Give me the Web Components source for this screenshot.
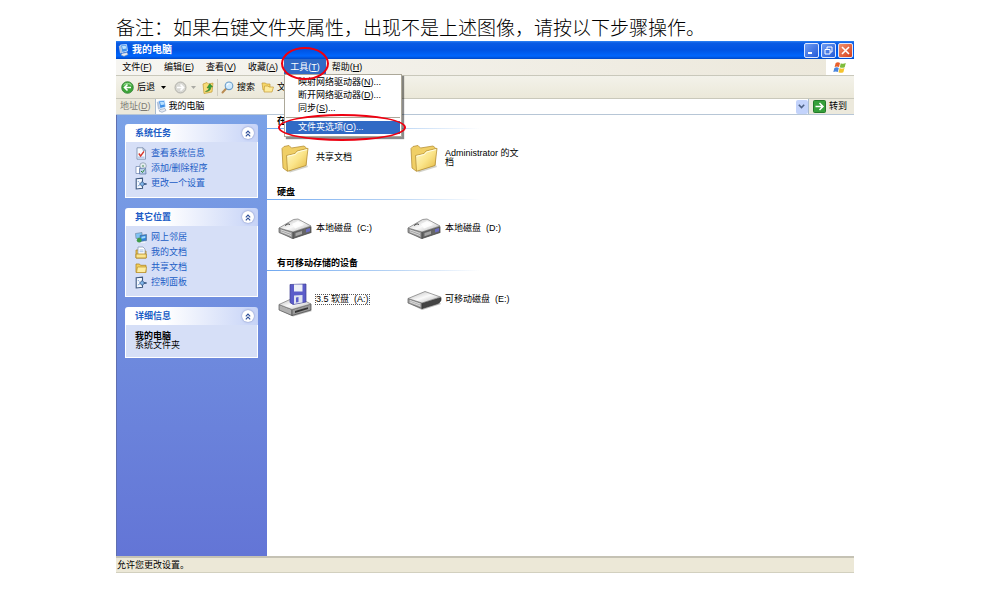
<!DOCTYPE html>
<html lang="zh-CN">
<head>
<meta charset="utf-8">
<title>我的电脑</title>
<style>
  body {
    margin: 0;
    background: #ffffff;
    color: #000000;
    font-family: "Liberation Sans", "Noto Sans CJK SC", sans-serif;
    font-size: 9px;
    line-height: 13px;
  }
</style>
</head>
<body>
<doc-page>
  <span slot="note">备注：如果右键文件夹属性，出现不是上述图像，请按以下步骤操作。</span>
  <xp-window heading="我的电脑">
    <xp-menubar slot="bars">
      <xp-menu label="文件" key="F"></xp-menu>
      <xp-menu label="编辑" key="E"></xp-menu>
      <xp-menu label="查看" key="V"></xp-menu>
      <xp-menu label="收藏" key="A"></xp-menu>
      <xp-menu label="工具" key="T" open marked>
        <xp-menu-item key="N">映射网络驱动器</xp-menu-item>
        <xp-menu-item key="D">断开网络驱动器</xp-menu-item>
        <xp-menu-item key="S">同步</xp-menu-item>
        <xp-menu-item key="O" active separated>文件夹选项</xp-menu-item>
      </xp-menu>
      <xp-menu label="帮助" key="H"></xp-menu>
    </xp-menubar>
    <xp-toolbar slot="bars"></xp-toolbar>
    <xp-address slot="bars" value="我的电脑"></xp-address>

    <xp-panel slot="side" heading="系统任务">
      <xp-link icon="info">查看系统信息</xp-link>
      <xp-link icon="programs">添加/删除程序</xp-link>
      <xp-link icon="settings">更改一个设置</xp-link>
    </xp-panel>
    <xp-panel slot="side" heading="其它位置">
      <xp-link icon="network">网上邻居</xp-link>
      <xp-link icon="documents">我的文档</xp-link>
      <xp-link icon="shared">共享文档</xp-link>
      <xp-link icon="settings">控制面板</xp-link>
    </xp-panel>
    <xp-panel slot="side" heading="详细信息">
      <xp-details heading="我的电脑">系统文件夹</xp-details>
    </xp-panel>

    <xp-group heading="在">
      <xp-item icon="folder">共享文档</xp-item>
      <xp-item icon="folder">Administrator 的文档</xp-item>
    </xp-group>
    <xp-group heading="硬盘">
      <xp-item icon="disk">本地磁盘 &nbsp;(C:)</xp-item>
      <xp-item icon="disk">本地磁盘 &nbsp;(D:)</xp-item>
    </xp-group>
    <xp-group heading="有可移动存储的设备">
      <xp-item icon="floppy" focused>3.5 软盘 &nbsp;(A:)</xp-item>
      <xp-item icon="removable">可移动磁盘 &nbsp;(E:)</xp-item>
    </xp-group>

    <span slot="status">允许您更改设置。</span>
  </xp-window>
</doc-page>

<script>
const FOLDER_GRADIENT = `
  <linearGradient id="f" x1="0" y1="0" x2="1" y2="1">
    <stop offset="0" stop-color="#fffbd0"/><stop offset=".5" stop-color="#fbe58a"/><stop offset="1" stop-color="#e3b63c"/>
  </linearGradient>`;

const DRIVE_GRADIENT = `
  <linearGradient id="t" x1="0" y1="0" x2="1" y2="1">
    <stop offset="0" stop-color="#b4b4b4"/><stop offset=".5" stop-color="#fafafa"/><stop offset="1" stop-color="#b0b0b0"/>
  </linearGradient>`;

// name: [width, height, svg body]
const ICONS = {
    computer: [11, 13, `
      <path d="M2.500 1 L8.500 .500 L9.500 7 L4 8.500z" fill="#3f8fe6" stroke="#dcecff" stroke-width=".8"/>
      <path d="M4 2 L7.700 1.700 L8.300 4.500 L4.800 5.200z" fill="#b9e0ff"/>
      <path d="M.800 2 L2.500 1.500 L4 9 L2 9.500z" fill="#b4c4dc"/>
      <path d="M4 9.500 L9 8.500 L10 10.500 L6 12.300 L3 11z" fill="#e6ebf3" stroke="#8597b5" stroke-width=".6"/>`],
    back: [13, 13, `
      <circle cx="6.500" cy="6.500" r="5.800" fill="#3ea53a" stroke="#2c7d2d" stroke-width=".8"/>
      <path d="M2.500 4.500 A4.800 4.800 0 0 1 10.500 4.500" fill="none" stroke="#8fd888" stroke-width="1.200"/>
      <path d="M6.500 3.500 L3.500 6.500 L6.500 9.500 M3.800 6.500 H10" fill="none" stroke="#fff" stroke-width="1.600"/>`],
    forward: [13, 13, `
      <circle cx="6.500" cy="6.500" r="5.500" fill="#d9d9d4" stroke="#aaaaa4" stroke-width=".9"/>
      <path d="M6.500 3.500 L9.500 6.500 L6.500 9.500 M3 6.500 H9.200" fill="none" stroke="#fff" stroke-width="1.600"/>`],
    caret: [5, 3, `<path d="M0 0 H5 L2.500 3z" fill="currentColor"/>`],
    up: [12, 13, `
      <path d="M1 3 L5 1.500 L6.500 3 L11 2 L10 11 L2 12.500z" fill="#f8dc78" stroke="#c29a33" stroke-width=".7"/>
      <path d="M3.500 10.500 Q7.500 9.500 7 6.500 L5 7 L7.800 2.800 L10.500 5.800 L8.800 6.100 Q9 10.500 3.500 10.500z" fill="#35a336" stroke="#1d6d20" stroke-width=".5"/>`],
    search: [13, 13, `
      <path d="M1.500 11.500 L5 7.800" stroke="#b98b52" stroke-width="2" stroke-linecap="round"/>
      <circle cx="8" cy="4.800" r="3.800" fill="#cfeafd" stroke="#6a9cc9" stroke-width="1.100"/>
      <path d="M6 4.500 A2.200 2.200 0 0 1 8.500 2.600" stroke="#fff" fill="none"/>`],
    folders: [13, 12, `
      <path d="M1 2 H4.500 L5.500 3 H9 V9 H2z" fill="#f6d768" stroke="#c39a33" stroke-width=".7"/>
      <path d="M3.500 5 H7 L8 6 H12.500 L11 11 H3z" fill="#fdeb9b" stroke="#c39a33" stroke-width=".7"/>`],
    flag: [14, 13, `
      <path d="M2.700 2 Q5 .600 7 2 L6 6 Q4 4.800 1.600 6z" fill="#e8602c"/>
      <path d="M7.800 2.200 Q10 3.400 12.800 2.100 L11.700 6.200 Q9 7.300 6.800 6.200z" fill="#7ebc3b"/>
      <path d="M1.400 6.900 Q3.800 5.700 5.800 6.900 L4.800 11 Q2.800 9.900 .300 11z" fill="#4a86dd"/>
      <path d="M6.600 7.100 Q8.900 8.300 11.500 7.100 L10.400 11.200 Q7.800 12.300 5.500 11.200z" fill="#f5c32d"/>`],
    chevrons: [6, 7, `<path d="M.800 3.300 L3 1 L5.200 3.300 M.800 6.300 L3 4 L5.200 6.300" fill="none" stroke="#2c4d98" stroke-width="1.100"/>`],
    down: [7, 5, `<path d="M.800 .800 L3.500 3.500 L6.200 .800" fill="none" stroke="#4d6185" stroke-width="1.600"/>`],
    go: [13, 13, `
      <rect x=".500" y=".500" width="12" height="12" rx="1" fill="#36a03a" stroke="#247a2a"/>
      <path d="M6.500 3 L10 6.500 L6.500 10 M2.500 6.500 H9.500" fill="none" stroke="#fff" stroke-width="1.500"/>`],
    info: [12, 13, `
      <path d="M2 .800 H8 L10.500 3.300 V12.200 H2z" fill="#f7fafe" stroke="#7488a8" stroke-width=".8"/>
      <path d="M8 .800 V3.300 H10.500" fill="none" stroke="#7488a8" stroke-width=".8"/>
      <path d="M3 9.500 H9.500 V11.500 H3z" fill="#b9cdec"/>
      <path d="M3.800 6.500 L5.600 9 L9 4.300" fill="none" stroke="#d5362a" stroke-width="1.400"/>`],
    programs: [12, 13, `
      <circle cx="8" cy="4" r="3.300" fill="#e4ebf0" stroke="#8194a8" stroke-width=".7"/>
      <circle cx="8" cy="4" r="1" fill="#79ad86"/>
      <path d="M1 4.500 H5 V11.500 H1z" fill="#fff" stroke="#6b83ad" stroke-width=".7"/>
      <path d="M4.500 6.500 L10.500 6 L11 12 H4.500z" fill="#bcd0ed" stroke="#5570a0" stroke-width=".7"/>
      <path d="M6 9 L7.500 10.500 L9.500 7.500" stroke="#2f8a3b" fill="none"/>`],
    settings: [12, 13, `
      <path d="M1.200 1.800 L7.500 1.200 V11.200 L1.200 12z" fill="#f4f8fe" stroke="#3e587f" stroke-width="1.100"/>
      <path d="M2.800 4 L4.300 5.500 M2.800 9 L4.800 8" fill="none" stroke="#7fa5d8"/>
      <path d="M4.500 7 L7.300 4.500 L9.500 7 L7.300 9.500z" fill="#7fb4e8" stroke="#31527f" stroke-width=".8"/>
      <path d="M9 7 H11.600" stroke="#31527f" stroke-width="1.600"/>`],
    network: [12, 13, `
      <path d="M.500 2.500 L7 1.500 V6.500 L1 7.500z" fill="#7fc4f5" stroke="#6a7f9b" stroke-width=".6"/>
      <path d="M5 4.500 L11.500 3.500 V9.500 L5.500 10.500z" fill="#2f83d6" stroke="#4c668c" stroke-width=".6"/>
      <path d="M6.500 5.700 L10.300 5 V7 L6.500 7.700z" fill="#a2dcff"/>
      <circle cx="4.200" cy="9.200" r="2.400" fill="#3f9b4a"/>
      <path d="M6 11 L10 10.500 L10.500 12 H6z" fill="#f0f3f8"/>`],
    documents: [12, 13, `
      <path d="M1 4 H4 L5 5 H11 V12 H1z" fill="#eec650" stroke="#b08625" stroke-width=".8"/>
      <path d="M3 1 H8 L10 3 V9 H3z" fill="#fff" stroke="#7c8faf" stroke-width=".7"/>
      <path d="M4.500 4 H8.500 M4.500 5.700 H8.500" stroke="#7fa5d8" stroke-width=".7"/>
      <path d="M1 8 H11.300 V12 H1z" fill="#fbe48c" stroke="#b08625" stroke-width=".8"/>`],
    shared: [12, 13, `
      <path d="M1 3 H4.500 L5.500 4.300 H11 V11.500 H1z" fill="#f3cf5b" stroke="#b08625" stroke-width=".8"/>
      <path d="M2.500 6 H11.500 L10.500 11.500 H1.500z" fill="#fdec9f" stroke="#b08625" stroke-width=".6"/>`],
    folder: [34, 30, `${FOLDER_GRADIENT}
      <path d="M9 27 L29 22 L30 24 L12 29.500z" fill="#b5b5a8" opacity=".6"/>
      <path d="M4 5.500 L6 3.500 L11 2.500 L13.500 5 L26 3 L28.500 5 L28 22 L9 28 L5 25z" fill="#f0cf66" stroke="#b8923a" stroke-width=".8"/>
      <path d="M8.500 12.500 L17 10.500 L19 8 L30 5.300 L28 22.500 L9.500 28.300z" fill="url(#f)" stroke="#b8923a" stroke-width=".8"/>
      <path d="M9.500 13.300 L17.500 11.400 L19.500 9 L29 6.600" fill="none" stroke="#fffde4"/>`],
    disk: [34, 22, `${DRIVE_GRADIENT}
      <path d="M4 15 L14 21 L34 14.500 L30 11z" fill="#777" opacity=".5"/>
      <path d="M1 10 L15 14 V20.500 L1 14.500z" fill="#9e9e9e" stroke="#555" stroke-width=".7"/>
      <path d="M15 14 L33 8.500 V14.500 L15 20.500z" fill="#666" stroke="#444" stroke-width=".7"/>
      <path d="M1 10 L15.500 1.500 L20 1 L33 8 L15 14z" fill="url(#t)" stroke="#777" stroke-width=".7"/>
      <path d="M14 6 L20 3 L26 7 L17 10.500z" fill="#fff" opacity=".8"/>
      <path d="M7 7.500 L10 5.800 L12 6.500" stroke="#444" fill="none"/>
      <path d="M3 12 L13 15.500 M3 13.700 L13 17.500" stroke="#e6e6e6" stroke-width=".8"/>
      <path d="M17.500 15 L24 13 V16 L17.500 18.200z" fill="#a6a6a6"/>
      <path d="M28 11.300 L32 10 V13.200 L28 14.600z" fill="#6a6dc0"/>`],
    floppy: [34, 34, `${DRIVE_GRADIENT}
      <path d="M3 28 L15 33.500 L34 28 L30 24z" fill="#777" opacity=".5"/>
      <path d="M1 21.500 L14 26.500 V32.500 L1 27z" fill="#b0b0b0" stroke="#555" stroke-width=".7"/>
      <path d="M14 26.500 L33 21 V27 L14 32.500z" fill="#999" stroke="#444" stroke-width=".7"/>
      <path d="M1 21.500 L13 16 L20 14.500 L33 21 L14 26.500z" fill="url(#t)" stroke="#777" stroke-width=".7"/>
      <path d="M17 28 L30 24.300 V26 L17 30z" fill="#333"/>
      <path d="M12 1.500 L28 1 V19 L15 21.500 L12 19.500z" fill="#5b5cc9" stroke="#3c3d91" stroke-width=".7"/>
      <path d="M16 1.500 H24.500 V8.500 H16z" fill="#eef1f6"/>
      <path d="M16 12.500 L24.500 12 V19.500 L16 21z" fill="#dfe3ee"/>
      <path d="M18 14.500 L20.500 14 V19 L18 19.500z" fill="#5b5cc9"/>`],
    removable: [34, 22, `${DRIVE_GRADIENT}
      <path d="M5 16 L15 21 L34 15 L30 11z" fill="#777" opacity=".5"/>
      <path d="M1 9.500 L15 14 V19.500 L1 14z" fill="#a8a8a8" stroke="#555" stroke-width=".7"/>
      <path d="M15 14 L34 8.500 Q35 12.500 31 14.500 L15 19.500z" fill="#444" stroke="#333" stroke-width=".7"/>
      <path d="M1 9.500 L18 2.500 L33.500 8 L15 14z" fill="url(#t)" stroke="#777" stroke-width=".7"/>
      <path d="M3 11.500 L13 15 M3 13 L13 16.800" stroke="#e6e6e6" stroke-width=".8"/>`],
    minimize: [9, 9, `<path d="M1 7 H5" stroke="#fff" stroke-width="2"/>`],
    restore: [9, 9, `<path d="M3 3 V1 H8 V6 H6 M1 3.500 H6 V8 H1z" fill="none" stroke="#fff"/>`],
    close: [9, 9, `<path d="M1 1 L8 8 M8 1 L1 8" stroke="#fff" stroke-width="1.600"/>`],
};

class XpBase extends HTMLElement {
    constructor() {
        super();
        this.attachShadow({ mode: 'open' });
    }

    connectedCallback() {
        this.shadowRoot.innerHTML = this.render();
    }

    attr(name) {
        return this.getAttribute(name) || '';
    }
}

class XpIcon extends XpBase {
    render() {
        const [w, h, body] = ICONS[this.attr('name')];
        return `
        <style>
          :host { display: inline-flex; flex: none; }
          svg { display: block; overflow: visible; }
        </style>
        <svg width="${w}" height="${h}" viewBox="0 0 ${w} ${h}" aria-hidden="true">${body}</svg>`;
    }
}

class DocPage extends XpBase {
    render() {
        return `
        <style>
          :host {
            display: flex;
            flex-direction: column;
            box-sizing: border-box;
            min-height: 100vh;
            padding: 12px 127px 20px 116px;
          }
          p {
            margin: 0;
            font-family: "Noto Sans CJK SC", sans-serif;
            font-weight: 300;
            font-size: 19px;
            line-height: 29px;
          }
          ::slotted(xp-window) { flex: 1; }
        </style>
        <p><slot name="note"></slot></p>
        <slot></slot>`;
    }
}

class XpWindow extends XpBase {
    render() {
        return `
        <style>
          :host { display: flex; flex-direction: column; }
          header {
            display: flex;
            align-items: center;
            gap: 3px;
            height: 18px;
            padding: 0 1px 0 2px;
            background: linear-gradient(#2f86f4 0, #0a5be4 2px, #0054e3 9px, #0066fd 15px, #0048c6 100%);
            color: #ffffff;
          }
          h1 { flex: 1; margin: 0; font-size: 10px; line-height: 16px; }
          .controls { display: flex; gap: 2px; }
          button {
            display: flex;
            align-items: center;
            justify-content: center;
            width: 15px;
            height: 15px;
            padding: 0;
            border: 1px solid #dce8ff;
            border-radius: 2px;
            background: linear-gradient(135deg, #6f9cf2, #2259d8);
          }
          .close { background: linear-gradient(135deg, #f0906e, #d6401c); }
          .body { flex: 1; display: flex; }
          aside {
            display: flex;
            flex-direction: column;
            gap: 10px;
            box-sizing: border-box;
            width: 151px;
            padding: 9px 9px 9px 8px;
            border-left: 1px solid #5f6fb0;
            background: linear-gradient(#7ba2e7, #6375d6);
          }
          main { flex: 1; min-width: 0; }
          footer {
            height: 14px;
            padding: 0 1px;
            border-top: 2px solid #c5c2b4;
            border-bottom: 1px solid #d2d0bf;
            background: #ece8d7;
            line-height: 14px;
          }
        </style>
        <header>
          <xp-icon name="computer"></xp-icon>
          <h1>${this.attr('heading')}</h1>
          <div class="controls">
            <button aria-label="最小化"><xp-icon name="minimize"></xp-icon></button>
            <button aria-label="还原"><xp-icon name="restore"></xp-icon></button>
            <button class="close" aria-label="关闭"><xp-icon name="close"></xp-icon></button>
          </div>
        </header>
        <slot name="bars"></slot>
        <div class="body">
          <aside><slot name="side"></slot></aside>
          <main><slot></slot></main>
        </div>
        <footer><slot name="status"></slot></footer>`;
    }
}

class XpMenubar extends XpBase {
    render() {
        return `
        <style>
          :host {
            display: flex;
            height: 16px;
            border-bottom: 1px solid #c9c8bb;
            background: linear-gradient(90deg, #f6f5f1, #ece8db);
          }
          nav { flex: 1; display: flex; }
          .flag {
            display: flex;
            align-items: center;
            justify-content: center;
            width: 28px;
            background: #ffffff;
          }
        </style>
        <nav><slot></slot></nav>
        <div class="flag"><xp-icon name="flag"></xp-icon></div>`;
    }
}

class XpMenu extends XpBase {
    render() {
        const open = this.hasAttribute('open');
        return `
        <style>
          :host { display: block; position: relative; }
          button {
            width: 42px;
            height: 16px;
            padding: 0;
            border: 0;
            background: transparent;
            color: inherit;
            font: inherit;
            line-height: 16px;
            white-space: nowrap;
          }
          :host([open]) button { background: #316ac5; color: #ffffff; }
          .menu {
            position: absolute;
            z-index: 1;
            top: 15px;
            left: 0;
            box-sizing: border-box;
            width: 118px;
            padding: 1px 1px 2px;
            border: 1px solid #aca899;
            background: #ffffff;
            box-shadow: 2px 2px 1px rgba(0, 0, 0, .45);
          }
          .mark {
            position: absolute;
            z-index: 2;
            inset: -12px -3px -5px -3px;
            border: 2px solid #ee0010;
            border-radius: 50%;
            pointer-events: none;
          }
        </style>
        <button aria-haspopup="menu" aria-expanded="${open}">${this.attr('label')}(<u>${this.attr('key')}</u>)</button>
        ${open ? '<div class="menu" role="menu"><slot></slot></div>' : ''}
        ${this.hasAttribute('marked') ? '<div class="mark"></div>' : ''}`;
    }
}

class XpMenuItem extends XpBase {
    render() {
        return `
        <style>
          :host { display: block; position: relative; }
          button {
            display: block;
            width: 100%;
            height: 13px;
            padding: 0 12px;
            border: 0;
            background: transparent;
            color: inherit;
            font: inherit;
            text-align: left;
            white-space: nowrap;
          }
          :host([separated]) {
            margin-top: 2px;
            padding-top: 3px;
            border-top: 1px solid #aca899;
          }
          :host([active]) button { background: #316ac5; color: #ffffff; }
          .mark {
            position: absolute;
            z-index: 2;
            inset: -4px -6px -7px -8px;
            border: 2px solid #ee0010;
            border-radius: 50%;
            pointer-events: none;
          }
        </style>
        <button role="menuitem"><slot></slot>(<u>${this.attr('key')}</u>)...</button>
        ${this.hasAttribute('active') ? '<div class="mark"></div>' : ''}`;
    }
}

class XpToolbar extends XpBase {
    render() {
        return `
        <style>
          :host {
            display: flex;
            align-items: center;
            height: 22px;
            padding-left: 5px;
            border-bottom: 1px solid #c9c8bb;
            background: linear-gradient(#f3f2ea, #ebe8d9);
          }
          button {
            display: flex;
            align-items: center;
            gap: 3px;
            padding: 0;
            border: 0;
            background: transparent;
            color: inherit;
            font: inherit;
          }
          .back { gap: 6px; margin-right: 8px; }
          .back span { display: flex; align-items: center; gap: 3px; }
          .forward { gap: 4px; margin-right: 6px; color: #aaaaa4; }
          i { width: 1px; height: 17px; margin: 0 3px; background: #d0cdbf; }
          .search { margin-right: 6px; }
        </style>
        <button class="back"><span><xp-icon name="back"></xp-icon>后退</span><xp-icon name="caret"></xp-icon></button>
        <button class="forward" aria-label="前进"><xp-icon name="forward"></xp-icon><xp-icon name="caret"></xp-icon></button>
        <button aria-label="向上"><xp-icon name="up"></xp-icon></button>
        <i></i>
        <button class="search"><xp-icon name="search"></xp-icon>搜索</button>
        <button aria-label="文件夹"><xp-icon name="folders"></xp-icon>文</button>`;
    }
}

class XpAddress extends XpBase {
    render() {
        return `
        <style>
          :host {
            display: flex;
            align-items: center;
            gap: 4px;
            height: 15px;
            padding: 0 7px 0 4px;
            border-bottom: 1px solid #b7c6d6;
            background: #ece9dc;
          }
          label { color: #7d7b73; }
          .combo {
            flex: 1;
            display: flex;
            align-items: center;
            gap: 2px;
            height: 15px;
            border-left: 1px solid #a9bcd0;
            border-right: 1px solid #a9bcd0;
            background: #ffffff;
          }
          select {
            flex: 1;
            appearance: none;
            padding: 0;
            border: 0;
            background: transparent;
            color: inherit;
            font: inherit;
          }
          .arrow {
            display: flex;
            align-items: center;
            justify-content: center;
            width: 12px;
            height: 14px;
            border-radius: 2px;
            background: #c3d3fb;
          }
          button {
            display: flex;
            align-items: center;
            gap: 3px;
            padding: 0;
            border: 0;
            background: transparent;
            color: inherit;
            font: inherit;
          }
        </style>
        <label for="path">地址(<u>D</u>)</label>
        <div class="combo">
          <xp-icon name="computer"></xp-icon>
          <select id="path"><option>${this.attr('value')}</option></select>
          <span class="arrow"><xp-icon name="down"></xp-icon></span>
        </div>
        <button><xp-icon name="go"></xp-icon>转到</button>`;
    }
}

class XpPanel extends XpBase {
    render() {
        return `
        <style>
          :host { display: block; }
          header {
            display: flex;
            align-items: center;
            height: 18px;
            padding: 0 4px 0 10px;
            border-radius: 3px 3px 0 0;
            background: linear-gradient(90deg, #ffffff 30%, #c6d3f7);
            color: #215dc6;
          }
          h2 { flex: 1; margin: 0; font-size: 9px; line-height: 18px; }
          button {
            display: flex;
            align-items: center;
            justify-content: center;
            width: 12px;
            height: 12px;
            padding: 0;
            border: 0;
            border-radius: 50%;
            background: #ffffff;
            box-shadow: 0 0 2px #6f7fb8;
          }
          .body {
            padding: 4px 9px 6px;
            border: 1px solid #ffffff;
            border-top: 0;
            background: #d6dff7;
          }
        </style>
        <header>
          <h2>${this.attr('heading')}</h2>
          <button aria-label="折叠"><xp-icon name="chevrons"></xp-icon></button>
        </header>
        <div class="body"><slot></slot></div>`;
    }
}

class XpLink extends XpBase {
    render() {
        return `
        <style>
          :host { display: block; }
          a {
            display: flex;
            align-items: center;
            gap: 4px;
            height: 15px;
            color: #215dc6;
            text-decoration: none;
          }
        </style>
        <a href="#"><xp-icon name="${this.attr('icon')}"></xp-icon><slot></slot></a>`;
    }
}

class XpDetails extends XpBase {
    render() {
        return `
        <style>
          :host { display: block; padding: 3px 0 1px; line-height: 9px; }
          b { display: block; }
        </style>
        <b>${this.attr('heading')}</b><slot></slot>`;
    }
}

class XpGroup extends XpBase {
    render() {
        return `
        <style>
          :host { display: block; }
          h2 {
            margin: 0;
            padding-left: 10px;
            font-size: 9px;
            line-height: 13px;
          }
          hr {
            width: 214px;
            height: 1px;
            margin: 0;
            border: 0;
            background: linear-gradient(90deg, #70a8f0, #b8d4f4 60%, #ffffff);
          }
          .items { display: flex; padding-left: 11px; }
        </style>
        <h2>${this.attr('heading')}</h2>
        <hr>
        <div class="items"><slot></slot></div>`;
    }
}

class XpItem extends XpBase {
    render() {
        return `
        <style>
          :host {
            display: flex;
            align-items: center;
            gap: 4px;
            width: 129px;
            height: 57px;
            line-height: 9px;
          }
          span { max-width: 80px; }
          :host([focused]) span { outline: 1px dotted #555555; }
        </style>
        <xp-icon name="${this.attr('icon')}"></xp-icon>
        <span><slot></slot></span>`;
    }
}

customElements.define('xp-icon', XpIcon);
customElements.define('doc-page', DocPage);
customElements.define('xp-window', XpWindow);
customElements.define('xp-menubar', XpMenubar);
customElements.define('xp-menu', XpMenu);
customElements.define('xp-menu-item', XpMenuItem);
customElements.define('xp-toolbar', XpToolbar);
customElements.define('xp-address', XpAddress);
customElements.define('xp-panel', XpPanel);
customElements.define('xp-link', XpLink);
customElements.define('xp-details', XpDetails);
customElements.define('xp-group', XpGroup);
customElements.define('xp-item', XpItem);
</script>
</body>
</html>
